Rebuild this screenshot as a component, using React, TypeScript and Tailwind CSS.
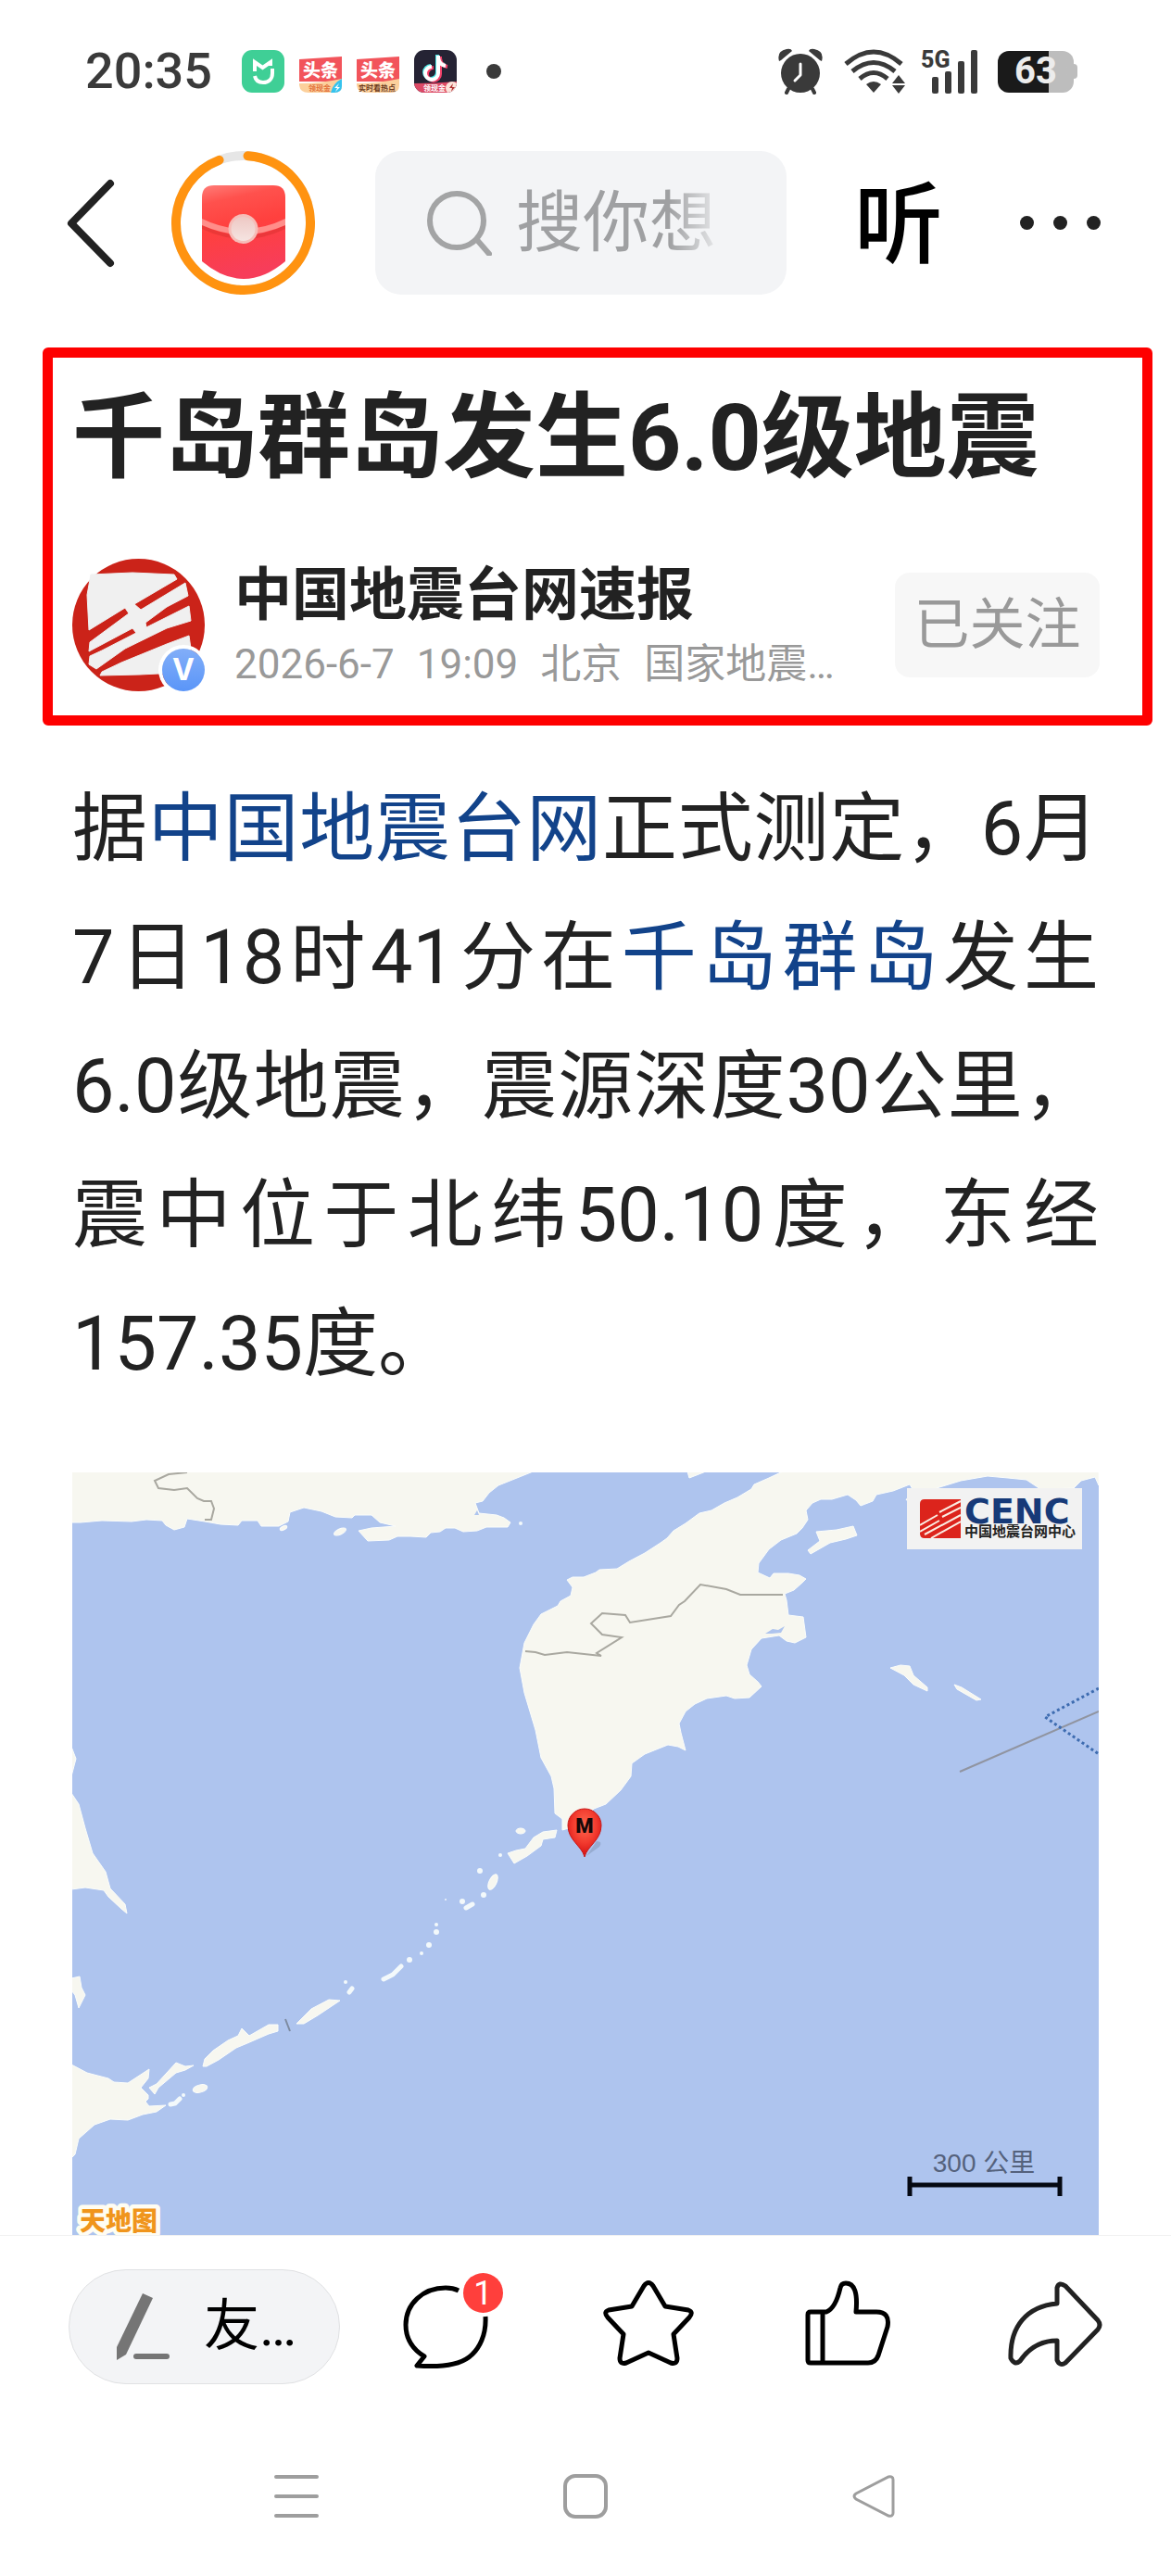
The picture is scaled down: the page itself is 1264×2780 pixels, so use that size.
import type { ReactNode } from "react";

const CJK = "font-[Roboto,'Noto_Sans_CJK_SC',sans-serif]";

function MiHomeIcon() {
  return (
    <svg viewBox="0 0 46 46" className="size-[46px]" aria-hidden="true">
      <rect width="46" height="46" rx="11" fill="#3fcf96" />
      <path d="M14 23V13l8.500 6L31 13v4M33 20v5M14 28c1 5 4 7 9 7 6 0 10-4 10-10" fill="none" stroke="#fff" strokeWidth="4" />
    </svg>
  );
}

function ToutiaoIcon({ label, bolt }: { label: string; bolt?: boolean }) {
  return (
    <svg viewBox="0 0 46 46" className={`size-[46px] ${CJK}`} aria-hidden="true">
      <path d="M0 10 46 7v27H0z" fill="#f2545b" />
      <path d="M0 36q23 0 46-5v7q0 8-9 8H10q-9 0-10-8z" fill="#fcd09c" />
      <text x="23" y="29" textAnchor="middle" fontSize="19" fontWeight="900" fill="#fff">头条</text>
      <text x="22" y="44" textAnchor="middle" fontSize="8" fontWeight="700" fill={bolt ? "#e2703a" : "#6b3a1e"}>{label}</text>
      {bolt && <path d="M46 31v8q0 7-8 7h-4q2-10 12-15z" fill="#35c3ee" />}
      {bolt && <path d="m43 36-5 5h3l-2 4 5-5h-3z" fill="#fff" />}
    </svg>
  );
}

function DouyinIcon() {
  const note = "M27 6v19a7 7 0 1 1-7-7M27 8q1 8 8 9";
  return (
    <svg viewBox="0 0 46 46" className={`size-[46px] ${CJK}`} aria-hidden="true">
      <clipPath id="dy"><rect width="46" height="46" rx="11" /></clipPath>
      <g clipPath="url(#dy)">
        <rect width="46" height="46" fill="#252334" />
        <g fill="none" strokeWidth="4">
          <path d={note} stroke="#4fe6e6" transform="translate(-2 -1)" />
          <path d={note} stroke="#f4436c" transform="translate(1 1)" />
          <path d={note} stroke="#fff" transform="translate(-1 0)" />
        </g>
        <path d="M0 36q23 0 46-2v12H0z" fill="#dc4a66" />
        <circle cx="41" cy="41" r="7" fill="#fbe3da" />
        <path d="m42 36-4 5h3l-1 4 4-5h-3z" fill="#b03030" />
        <text x="22" y="44" textAnchor="middle" fontSize="8" fontWeight="700" fill="#fff">领现金</text>
      </g>
    </svg>
  );
}

function StatusBar() {
  return (
    <div className="flex h-[154px] items-center justify-between pr-[101px] pl-[92px]">
      <div className="flex items-center">
        <time className="text-[54px] leading-none font-medium text-[#3a3a3a]">20:35</time>
        <div className="ml-8 flex gap-4">
          <MiHomeIcon />
          <ToutiaoIcon label="领现金" bolt />
          <ToutiaoIcon label="实时看热点" />
          <DouyinIcon />
        </div>
        <span className="ml-8 size-4 rounded-full bg-[#3a3a3a]" />
      </div>
      <div className="flex items-center">
        <svg viewBox="0 0 48 50" className="h-[50px] w-12" aria-label="闹钟">
          <g fill="#3a3a3a">
            <ellipse cx="24" cy="27" rx="21" ry="21" />
            <path d="M1 14Q-2 3 9 1q5-1 6 2L3 13zM47 14Q50 3 39 1q-5-1-6 2l12 10z" />
          </g>
          <path d="m11 44-2 4m28-4 2 4" stroke="#3a3a3a" strokeWidth="4" strokeLinecap="round" />
          <path d="M24 17v12l-6 6" fill="none" stroke="#fff" strokeWidth="3" strokeLinecap="round" strokeLinejoin="round" />
        </svg>
        <svg viewBox="0 0 66 48" className="ml-[23px] h-12 w-[66px]" aria-label="Wi-Fi">
          <g fill="none" stroke="#3a3a3a" strokeWidth="5">
            <path d="M2 16q30-26 60 0" />
            <path d="M9 24q23-19 46 0" />
            <path d="M17 32q15-13 30 0" />
          </g>
          <path d="M24 38q8-6 16 0l-8 9z" fill="#3a3a3a" />
          <path d="m59 28 7 9H52zm0 20 7-9H52z" fill="#3a3a3a" />
        </svg>
        <svg viewBox="0 0 62 48" className={`ml-[17px] h-12 w-[62px] overflow-visible ${CJK}`} aria-label="5G">
          <text x="0" y="20" fontSize="25" fontWeight="800" fill="#3a3a3a">5G</text>
          <g fill="#3a3a3a">
            <rect x="12" y="30" width="7" height="18" rx="2" />
            <rect x="26" y="24" width="7" height="24" rx="2" />
            <rect x="40" y="13" width="7" height="35" rx="2" />
            <rect x="54" y="1" width="7" height="47" rx="2" />
          </g>
        </svg>
        <div className="ml-[21px] flex items-center">
          <div className="flex h-[45px] w-[82px] items-center justify-center rounded-xl bg-linear-to-r from-[#1a1a1a] from-67% to-[#bdbdbd] to-67% text-[40px] leading-none font-bold text-[#ececec]">
            63
          </div>
          <span className="h-4 w-1 rounded-r bg-[#bdbdbd]" />
        </div>
      </div>
    </div>
  );
}

function RedPacket() {
  return (
    <svg viewBox="0 0 155 155" className="size-[155px]" aria-hidden="true">
      <defs>
        <linearGradient id="packet" x1="0" y1="0" x2="0.200" y2="1">
          <stop offset="0" stopColor="#ff7d78" />
          <stop offset="0.200" stopColor="#ff514d" />
          <stop offset="0.500" stopColor="#ff403e" />
          <stop offset="1" stopColor="#f73d5a" />
        </linearGradient>
        <linearGradient id="seal" x1="0" y1="0" x2="0" y2="1">
          <stop offset="0" stopColor="#eec8c4" />
          <stop offset="1" stopColor="#f5e4e1" />
        </linearGradient>
      </defs>
      <circle cx="77.500" cy="77.500" r="72.500" fill="none" stroke="#e6e6e6" strokeWidth="10" />
      <circle cx="77.500" cy="77.500" r="72.500" fill="none" stroke="#ff9310" strokeWidth="10" strokeLinecap="round" pathLength="360" strokeDasharray="335 25" transform="rotate(-86 77.500 77.500)" />
      <path d="M33 50q0-13 13-13h64q13 0 13 13v69q-45 38-90 0z" fill="url(#packet)" />
      <path d="M33 80q45 22 90 0v4q-45 22-90 0z" fill="#d92f30" opacity=".5" />
      <path d="M33 73q45 22 90 0v7q-45 20-90 0z" fill="#ff8e8a" />
      <circle cx="77.500" cy="84" r="16" fill="#f6bdb8" />
      <circle cx="77.500" cy="84" r="13" fill="url(#seal)" />
    </svg>
  );
}

function TopBar() {
  return (
    <header className="mt-[9px] flex items-center pr-[76px] pl-[72px]">
      <button aria-label="返回">
        <svg viewBox="0 0 52 96" className="h-24 w-[52px]" fill="none" stroke="#222" strokeWidth="8" strokeLinecap="round" strokeLinejoin="round">
          <path d="M47 5 5 48l42 43" />
        </svg>
      </button>
      <button aria-label="红包" className="ml-[61px]">
        <RedPacket />
      </button>
      <label className="ml-[65px] flex h-[155px] min-w-0 flex-1 items-center rounded-[28px] bg-[#f3f4f6] pr-14 pl-14">
        <span className="sr-only">搜索</span>
        <svg viewBox="0 0 70 70" className="size-[70px] shrink-0" fill="none" stroke="#a3a4a5" strokeWidth="6" strokeLinecap="round">
          <circle cx="32" cy="32" r="29" />
          <path d="m54 53 13 15" />
        </svg>
        <input
          type="text"
          placeholder="搜你想"
          className="ml-[26px] h-[108px] w-full min-w-0 bg-transparent mask-r-from-70% mask-r-to-96% text-[72px] font-normal outline-none placeholder:text-[#9fa0a2] placeholder:opacity-100"
        />
      </label>
      <button className="ml-[73px] w-24 pt-1 text-[96px] leading-[140px] font-medium text-black">听</button>
      <button aria-label="更多" className="ml-[83px] flex gap-[21px]">
        <span className="size-[15px] rounded-full bg-[#222]" />
        <span className="size-[15px] rounded-full bg-[#222]" />
        <span className="size-[15px] rounded-full bg-[#222]" />
      </button>
    </header>
  );
}

function Avatar() {
  return (
    <div className="relative size-[143px] shrink-0">
      <svg viewBox="0 0 143 143" className="size-full" aria-hidden="true">
        <circle cx="71.500" cy="71.500" r="71.500" fill="#cb2319" />
        <g fill="#f0f0f0" stroke="#f0f0f0" strokeWidth="1" strokeLinejoin="round">
          <path d="M20 17 65 15l45 2 3 5-46 27 7 6 48-29 3 14-23 12-23 17 1 5 46-23 2 16-26 8-45 22-31 22-8-5 1-9 13-6 37-19-4-5-47 25 1-10 42-31-4-6-39 24-2-38z" />
          <path d="m126 83 2 14-15 26-40 2-43 1 2-4 21-10 49-20z" />
        </g>
      </svg>
      <span className="absolute right-0 bottom-0 flex size-[46px] items-center justify-center rounded-full bg-linear-to-b from-[#82aef8] to-[#5a95f8] font-[Inter,sans-serif] text-[32px] leading-none font-bold text-white ring-4 ring-white">
        V
      </span>
    </div>
  );
}

function Headline() {
  return (
    <section className="mt-[57px] mr-5 ml-[46px] rounded-md border-[11px] border-[#fe0000] pt-[22px] pr-[46px] pb-[26px] pl-[21px]">
      <h1 className="text-[100px] leading-[130px] font-bold text-[#222]">千岛群岛发生6.0级地震</h1>
      <div className="mt-[65px] flex items-center">
        <Avatar />
        <div className="ml-8 min-w-0 flex-1">
          <p className="text-[62px] leading-[76px] font-bold text-[#222]">中国地震台网速报</p>
          <p className="mt-2 flex gap-6 text-[44px] leading-[56px] whitespace-nowrap text-[#999]">
            <span>2026-6-7</span>
            <span>19:09</span>
            <span>北京</span>
            <span>国家地震…</span>
          </p>
        </div>
        <button className="h-[113px] w-[221px] shrink-0 rounded-2xl bg-[#f7f7f7] text-[60px] text-[#999]">已关注</button>
      </div>
    </section>
  );
}

function QuakeMap() {
  return (
    <figure className="relative mx-[78px] mt-[69px] overflow-hidden">
      <svg viewBox="0 0 1108 823" className="block w-full" role="img" aria-label="千岛群岛地震震中位置图">
        <defs>
          <radialGradient id="pin" cx=".5" cy=".35" r=".6">
            <stop offset="0" stopColor="#ff6a50" />
            <stop offset=".6" stopColor="#f23a2e" />
            <stop offset="1" stopColor="#d81414" />
          </radialGradient>
        </defs>
        <rect width="1108" height="823" fill="#aec4ee" />
        <g fill="#f7f7f0" stroke="#fbfdfb" strokeWidth="1" strokeLinejoin="round">
          <path d="M-2-2H499L495 0 475 8 460 14 450 22 443 31 435 33 439 44 458 46 466 49 473 54 470 59 447 59 437 63 422 64 413 60 403 60 397 64 387 65 382 70 365 69 351 69 342 73 319 74 309 63 323 60 349 58 332 54 323 46 305 46 302 49 284 48 269 42 250 38 235 43 233 53 223 58 204 58 200 52 183 52 179 57 160 56 143 53 124 50 121 59 110 62 101 57 97 52 80 51 64 53 32 52 9 54-2 54z" />
          <path d="M769-2 752 6 736 13 733 18 718 27 704 33 690 41 677 44 662 55 649 63 642 71 635 76 618 87 601 96 588 104 569 105 565 108 552 113 540 113 534 116 540 124 538 133 527 139 524 144 506 153 498 164 488 184 483 211 488 238 500 278 506 308 517 328 520 341 521 368 529 374 529 386 546 381 563 363 576 358 592 343 603 328 604 314 618 304 643 294 654 296 662 300 657 281 655 271 662 258 672 250 685 244 706 241 715 244 731 243 744 231 740 226 731 218 728 208 733 191 744 179 763 176 771 182 780 184 792 178 789 156 773 154 771 138 769 131 779 127 788 119 792 115 785 111 773 109 757 109 753 114 740 108 741 98 752 83 765 73 782 66 788 60 794 51 792 41 799 33 808 29 820 29 837 24 846 30 851 36 864 31 868 24 886 20 904 13 907 18 900 30 933 17 959 9 988 4 1010 6 1030 8 1045 18 1081 17 1089 9 1104 5 1108 14V-2z" />
          <path d="M664-1 666 6 684-1zM803 64l22-2 18-4 4 10-12 4-17 4-21 12-3-4 13-10zM883 211l11-3 10 1 4 10 15 13v4l-15-7-10-10zM952 229l8 3 21 13-5 1-21-12z" />
          <path d="m470 411 7 11 14-8 15-11 2-7 13-2 2-8-15 2-10 6-9 12-10 2z" />
          <path d="m242 595 16-16 19-10 12 1-24 16-15 9zM141 641l2-8 9-9 16-11 11-5 4-8 8 8 21-12 10 0 0 7-10 3-23 10-12 5-19 13-13 7zM83 664l8-4 21-23 10 4 9-1-9 5-10 3-19 16-4 7z" />
          <path d="M-1 639 16 648 39 654 45 658 60 659 83 644 82 654 74 664 82 672 82 676 79 679 83 684 101 683 91 690 76 693 60 699 41 698 24 704 7 719 3 736-1 740zM-1 346 7 358 14 384 22 411 36 431 41 449 57 466 59 476 53 471 39 458 34 451 14 448-1 450zM-1 546 8 544 10 556 14 564 7 578 3 564-1 559zM-1 296 4 309-1 328z" />
          <ellipse cx="289" cy="64" rx="7" ry="3" transform="rotate(-25 289 64)" />
          <ellipse cx="228" cy="60" rx="4" ry="2" transform="rotate(-25 228 60)" />
          <ellipse cx="138" cy="665" rx="8" ry="4" transform="rotate(-15 138 665)" />
          <ellipse cx="484" cy="387" rx="5" ry="3" />
          <ellipse cx="454" cy="442" rx="4" ry="9" transform="rotate(25 454 442)" />
        </g>
        <g fill="#f3f9fb">
          <circle cx="484" cy="55" r="2" />
          <circle cx="440" cy="430" r="3" />
          <circle cx="444" cy="456" r="3" />
          <circle cx="421" cy="463" r="3" />
          <circle cx="403" cy="461" r="1" />
          <circle cx="393" cy="488" r="2" />
          <circle cx="393" cy="496" r="3" />
          <circle cx="385" cy="510" r="3" />
          <circle cx="377" cy="519" r="2" />
          <circle cx="364" cy="526" r="3" />
          <circle cx="295" cy="550" r="2" />
          <circle cx="462" cy="413" r="2" />
          <circle cx="120" cy="672" r="2" />
        </g>
        <path d="m432 466-7 4m-70 63-9 9-10 5m-34 10-3 4M116 676l-5 5-5 1" fill="none" stroke="#f3f9fb" strokeWidth="5" strokeLinecap="round" />
        <path d="m748 174 8-5 6 1 7-4-4 7-10 1zM434 46l3-5 2 5z" fill="#aec4ee" />
        <g fill="none" stroke="#a9a8a0" strokeWidth="2">
          <path d="M124 0 104 2 89 9 93 17 110 19 124 17 135 28 142 31 150 31 153 39 150 51 143 51" />
          <path d="M489 193 500 194 510 197 534 194 571 198 566 195 593 178 572 175 560 163 572 152 597 154 602 162 646 155 655 143 661 139 678 121 706 126 721 132 767 132" />
          <path d="m230 590 5 13" stroke="#7d8ba0" />
          <path d="M958 323 1108 258" stroke="#9094a0" />
        </g>
        <path d="m1108 233-58 31 58 40" fill="none" stroke="#3e6cb0" strokeWidth="3" strokeDasharray="3 3" />
        <path d="m555 414 14-10q4-6-3-6z" fill="#8093b4" opacity=".5" />
        <path d="M553 415c-3-12-18-18-18-34a18 18 0 0 1 36 0c0 16-15 22-18 34z" fill="url(#pin)" stroke="#c81818" strokeWidth="1" />
        <text x="553" y="389" textAnchor="middle" fontSize="22" fontWeight="900" fill="#160808" className="font-[Roboto,sans-serif]">M</text>
        <path d="M904 760v21m162-21v21M904 769h162" fill="none" stroke="#050912" strokeWidth="5" />
        <text x="984" y="755" textAnchor="middle" fontSize="28" fill="#55627c" className="font-['Liberation_Sans','Noto_Sans_CJK_SC',sans-serif]">300 公里</text>
        <text x="50" y="818" textAnchor="middle" fontSize="28" fontWeight="900" fill="#f0951c" stroke="#fffdf2" strokeWidth="9" strokeLinejoin="round" paintOrder="stroke" className={CJK}>天地图</text>
      </svg>
      <div className="absolute top-[17px] right-[18px] flex h-[66px] w-[189px] items-center bg-[#f2f2f2] pl-[14px]">
        <svg viewBox="0 0 44 42" className="h-[42px] w-11 shrink-0" aria-hidden="true">
          <path d="M0 5q0-5 5-5h39v42H5q-5 0-5-5z" fill="#dc241c" />
          <path d="M44 2 21 14m23-5L24 19M0 28l19-11M0 35l21-12m23-6L5 38m39-14L12 42" fill="none" stroke="#fbeee4" strokeWidth="2" />
        </svg>
        <div className="ml-1 whitespace-nowrap">
          <p className="font-['DejaVu_Sans',sans-serif] text-[38px] leading-7 font-bold text-[#173a78]">CENC</p>
          <p className="text-[15px] leading-4 font-bold text-[#222]">中国地震台网中心</p>
        </div>
      </div>
    </figure>
  );
}

function Action({ label, stroke, children }: { label: string; stroke: string; children: ReactNode }) {
  return (
    <button aria-label={label} className="relative justify-self-center">
      <svg viewBox="0 0 104 100" className="h-[100px] w-[104px]" fill="none" stroke={stroke} strokeWidth="5" strokeLinejoin="round" strokeLinecap="butt">
        {children}
      </svg>
      {label === "评论" && (
        <span className="absolute -top-2 left-[71px] flex size-[43px] items-center justify-center rounded-full bg-[#ff3f3c] text-[36px] leading-none text-white">1</span>
      )}
    </button>
  );
}

function BottomBar() {
  return (
    <footer className="border-t border-[#f2f2f2]">
      <div className="flex items-center pt-9 pr-[15px] pl-[74px]">
        <button className="flex h-[124px] w-[293px] shrink-0 items-center rounded-full border border-[#e0e1e3] bg-[#f3f4f6] pl-[49px] text-[60px] text-black">
          <svg viewBox="0 0 60 72" className="h-[72px] w-[60px]" fill="#757575" aria-hidden="true">
            <path d="m30 0 11 5L12 66l-10 6 0-14z" />
            <rect x="20" y="65" width="39" height="6" rx="3" />
          </svg>
          <span className="ml-9">友…</span>
        </button>
        <div className="ml-1 grid flex-1 grid-cols-4">
          <Action label="评论" stroke="#000">
            <path d="M66 11Q60 8 52 8C28 8 9 25 9 48c0 14 7 26 20 34l-8 10q40 3 56-9c12-9 19-25 18-44" />
          </Action>
          <Action label="收藏" stroke="#000">
            <path d="M47 6q5-7 10 0l13 22 25 4q6 2 1 8L79 58l4 26q0 7-7 5L52 78 28 89q-7 2-7-5l4-26L8 40q-5-6 1-8l25-4z" />
          </Action>
          <Action label="点赞" stroke="#000">
            <path d="M24 34H7q-3 0-3 3v49q0 3 3 3h62q8 0 11-8l10-31q3-16-12-16H56q3-31-11-31-5 0-6 5-5 22-15 26zm-4 0v55" />
          </Action>
          <Action label="分享" stroke="#222">
            <path d="M54 25V8q2-7 9-2l35 37q4 5 0 10L63 89q-6 4-9-3V65q-25 0-40 22-6 5-10-3C3 50 21 28 54 25z" />
          </Action>
        </div>
      </div>
      <nav aria-label="系统导航" className="grid grid-cols-3 justify-items-center px-[164px] pt-[97px] pb-[61px]">
        <button aria-label="最近任务">
          <svg viewBox="0 0 48 48" className="size-12" stroke="#9e9e9e" strokeWidth="4" strokeLinecap="round">
            <path d="M2 3h44M2 24h44M2 45h44" />
          </svg>
        </button>
        <button aria-label="主屏幕">
          <svg viewBox="0 0 48 48" className="size-12" fill="none" stroke="#9e9e9e" strokeWidth="4">
            <rect x="2" y="2" width="44" height="44" rx="11" />
          </svg>
        </button>
        <button aria-label="返回上一级">
          <svg viewBox="0 0 48 48" className="size-12" fill="none" stroke="#9e9e9e" strokeWidth="3">
            <path d="M4 21 39 3q5-1 5 3v36q0 4-5 3L4 27q-4-3 0-6z" />
          </svg>
        </button>
      </nav>
    </footer>
  );
}

export default function App() {
  return (
    <div lang="zh-CN" className={`min-h-screen bg-white ${CJK}`}>
      <StatusBar />
      <TopBar />
      <main>
        <Headline />
        <p className="mx-[78px] mt-[42px] text-justify text-[81px] leading-[139px] text-[#222]">
          据<a href="#cenc" className="text-[#12438a]">中国地震台网</a>正式测定，6月7日18时41分在<a href="#kuril" className="text-[#12438a]">千岛群岛</a>发生6.0级地震，震源深度30公里，震中位于北纬50.10度，东经157.35度。
        </p>
        <QuakeMap />
      </main>
      <BottomBar />
    </div>
  );
}
